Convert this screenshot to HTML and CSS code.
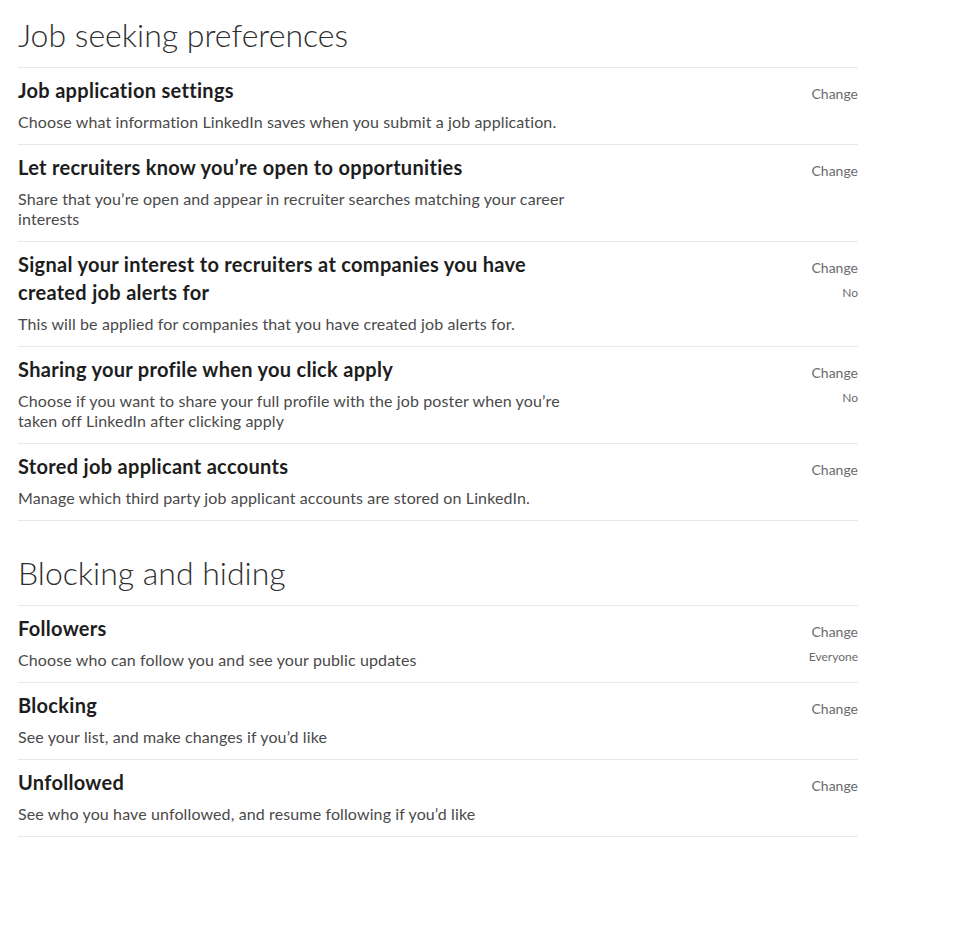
FILE: index.html
```html
<!DOCTYPE html>
<html lang="en">
<head>
<meta charset="utf-8">
<title>Job seeking preferences</title>
<link rel="stylesheet" href="styles.css">
</head>
<body>
<main class="page">
  <section class="section">
    <h1 class="section-title">Job seeking preferences</h1>
    <ul class="list">
      <li class="row">
        <div class="row-main">
          <h3 class="row-title">Job application settings</h3>
          <p class="row-desc">Choose what information LinkedIn saves when you submit a job application.</p>
        </div>
        <div class="row-side"><a class="change">Change</a></div>
      </li>
      <li class="row">
        <div class="row-main">
          <h3 class="row-title">Let recruiters know you’re open to opportunities</h3>
          <p class="row-desc">Share that you’re open and appear in recruiter searches matching your career interests</p>
        </div>
        <div class="row-side"><a class="change">Change</a></div>
      </li>
      <li class="row">
        <div class="row-main">
          <h3 class="row-title">Signal your interest to recruiters at companies you have created job alerts for</h3>
          <p class="row-desc">This will be applied for companies that you have created job alerts for.</p>
        </div>
        <div class="row-side"><a class="change">Change</a><span class="value">No</span></div>
      </li>
      <li class="row">
        <div class="row-main">
          <h3 class="row-title">Sharing your profile when you click apply</h3>
          <p class="row-desc">Choose if you want to share your full profile with the job poster when you’re taken off LinkedIn after clicking apply</p>
        </div>
        <div class="row-side"><a class="change">Change</a><span class="value">No</span></div>
      </li>
      <li class="row">
        <div class="row-main">
          <h3 class="row-title">Stored job applicant accounts</h3>
          <p class="row-desc">Manage which third party job applicant accounts are stored on LinkedIn.</p>
        </div>
        <div class="row-side"><a class="change">Change</a></div>
      </li>
    </ul>
  </section>
  <section class="section">
    <h1 class="section-title">Blocking and hiding</h1>
    <ul class="list">
      <li class="row">
        <div class="row-main">
          <h3 class="row-title">Followers</h3>
          <p class="row-desc">Choose who can follow you and see your public updates</p>
        </div>
        <div class="row-side"><a class="change">Change</a><span class="value">Everyone</span></div>
      </li>
      <li class="row">
        <div class="row-main">
          <h3 class="row-title">Blocking</h3>
          <p class="row-desc">See your list, and make changes if you’d like</p>
        </div>
        <div class="row-side"><a class="change">Change</a></div>
      </li>
      <li class="row">
        <div class="row-main">
          <h3 class="row-title">Unfollowed</h3>
          <p class="row-desc">See who you have unfollowed, and resume following if you’d like</p>
        </div>
        <div class="row-side"><a class="change">Change</a></div>
      </li>
    </ul>
  </section>
</main>
</body>
</html>
```

FILE: styles.css
```css
* { box-sizing: border-box; }
html, body { margin: 0; padding: 0; background: #fff; }
body {
  font-family: Lato, "Liberation Sans", sans-serif;
  color: rgba(0,0,0,.9);
}
.page {
  width: 840px;
  margin-left: 18px;
  padding-top: 15px;
  display: flex;
  flex-direction: column;
  gap: 32px;
}
.section-title {
  margin: 0 0 12px;
  font-size: 32px;
  line-height: 40px;
  font-weight: 300;
  color: #2f2f2f;
}
.list {
  list-style: none;
  margin: 0;
  padding: 0;
  border-top: 1px solid #e6e9ec;
}
.row {
  display: flex;
  justify-content: space-between;
  padding: 8px 0 12px;
  border-bottom: 1px solid #e6e9ec;
}
.row-main {
  width: 565px;
  display: flex;
  flex-direction: column;
  gap: 8px;
}
.row-title {
  margin: 0;
  font-size: 20px;
  line-height: 28px;
  font-weight: 700;
  letter-spacing: 0.3px;
  color: #1d1d1d;
}
.row-desc {
  margin: 0;
  font-size: 16px;
  line-height: 20px;
  font-weight: 400;
  letter-spacing: 0.12px;
  color: #4a4a4a;
}
.row-side {
  padding-top: 8px;
  display: flex;
  flex-direction: column;
  align-items: flex-end;
  gap: 7px;
}
.change {
  font-size: 14px;
  line-height: 20px;
  color: #6b6b6b;
  cursor: pointer;
}
.value {
  font-size: 12px;
  line-height: 16px;
  color: #6b6b6b;
}
```
